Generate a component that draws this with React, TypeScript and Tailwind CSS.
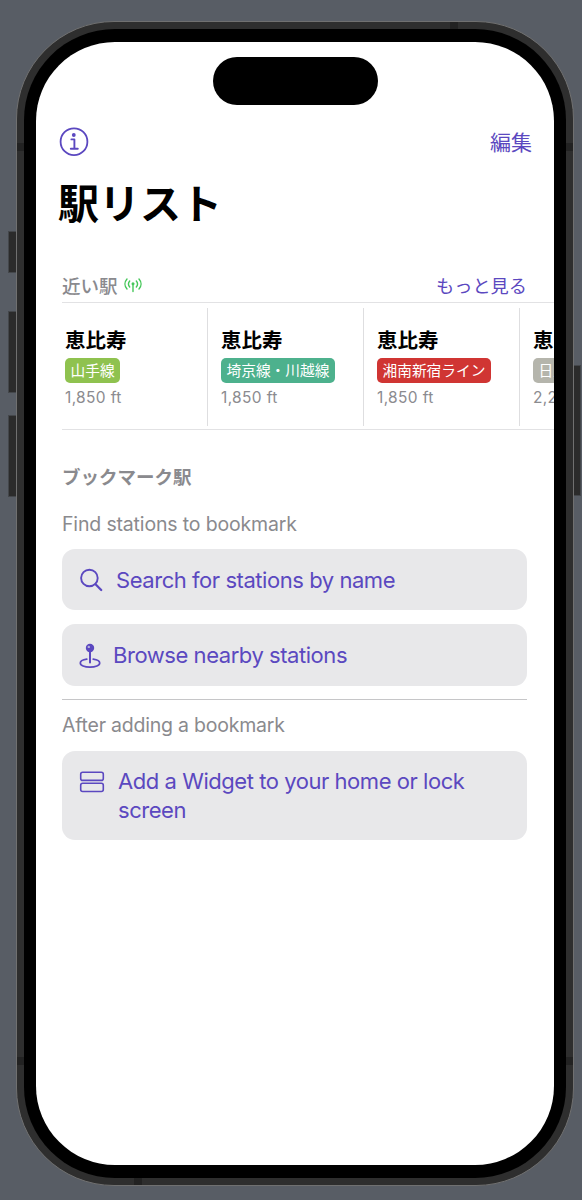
import type { ReactNode } from "react";

type Station = { name: string; line: string; badge: string; distance: string };

const stations: Station[] = [
  { name: "恵比寿", line: "山手線", badge: "bg-[#8fc24f]", distance: "1,850 ft" },
  { name: "恵比寿", line: "埼京線・川越線", badge: "bg-[#4db18d]", distance: "1,850 ft" },
  { name: "恵比寿", line: "湘南新宿ライン", badge: "bg-[#d03533]", distance: "1,850 ft" },
  { name: "恵比寿", line: "日比谷線", badge: "bg-[#b5b5ac]", distance: "2,200 ft" },
];

function InfoIcon() {
  return (
    <svg width="30" height="30" viewBox="0 0 30 30" fill="none" stroke="currentColor" strokeWidth="1.8">
      <circle cx="15" cy="14.7" r="13.4" />
      <circle cx="14.8" cy="8" r="1.9" fill="currentColor" stroke="none" />
      <path d="M12.4 12.4h3v9.2M11.8 21.8h7" strokeWidth="1.9" strokeLinecap="round" strokeLinejoin="round" />
    </svg>
  );
}

function AntennaIcon() {
  return (
    <svg width="20" height="16" viewBox="0 0 20 16" fill="none" stroke="currentColor" strokeWidth="1.4" strokeLinecap="round">
      <path d="M4 2c-2.700 3-2.700 7 0 10M16 2c2.700 3 2.700 7 0 10M6.700 4c-1.600 1.900-1.600 4.100 0 6M13.300 4c1.600 1.900 1.600 4.100 0 6M10 7.500v7" />
      <circle cx="10" cy="6.700" r="1.500" fill="currentColor" stroke="none" />
    </svg>
  );
}

function SearchIcon() {
  return (
    <svg width="24" height="24" viewBox="0 0 24 24" fill="none" stroke="currentColor" strokeLinecap="round">
      <circle cx="10.400" cy="10" r="8.300" strokeWidth="1.900" />
      <path d="M16.500 16.300l5.700 5.700" strokeWidth="2.300" />
    </svg>
  );
}

function PinIcon() {
  return (
    <svg width="22" height="26" viewBox="0 0 22 26" fill="none" stroke="currentColor" strokeWidth="1.700" strokeLinecap="round">
      <circle cx="11" cy="5" r="4.200" fill="currentColor" stroke="none" />
      <circle cx="9.800" cy="3.900" r="1.200" fill="#b6b0dc" stroke="none" />
      <path d="M11 9v10.500" strokeWidth="2" />
      <path d="M7.800 16.100C3.800 16.600 1.300 18 1.300 20c0 2.500 4.200 4.200 9.700 4.200s9.700-1.700 9.700-4.200c0-2-2.500-3.400-6.500-3.900" />
    </svg>
  );
}

function WidgetIcon() {
  return (
    <svg width="26" height="22" viewBox="0 0 26 22" fill="none" stroke="currentColor" strokeWidth="1.600">
      <rect x="1.700" y="1.200" width="22.600" height="8.200" rx="2" />
      <rect x="1.700" y="12.300" width="22.600" height="8.200" rx="2" />
    </svg>
  );
}

function StationCard({ station }: { station: Station }) {
  return (
    <div className="flex h-[118px] w-[156px] shrink-0 flex-col items-start border-r border-[#dedee0] pl-[13px] pt-[19px]">
      <div className="h-7 text-[20.500px] font-bold leading-7 text-black">{station.name}</div>
      <div className={`mt-[3px] flex h-[25px] items-center whitespace-nowrap rounded-[5px] px-[5.500px] pt-[2px] text-[14.700px] leading-none text-white ${station.badge}`}>
        {station.line}
      </div>
      <div className="mt-[4px] text-[15.500px] leading-[22px] tracking-[0.350px] text-[#8b8b8f]">{station.distance}</div>
    </div>
  );
}

function ActionButton({ className, children }: { className: string; children: ReactNode }) {
  return (
    <button className={`flex w-[465px] rounded-[13px] bg-[#e8e8ea] text-left text-[#5b48c0] ${className}`}>{children}</button>
  );
}

export default function App() {
  return (
    <main className="relative flex h-[1200px] w-[582px] overflow-hidden bg-[#585d65] pl-[16px] pt-[21px] font-['Inter','Noto_Sans_CJK_JP',sans-serif]">
      <i className="absolute left-[8px] top-[231px] h-[42px] w-[9px] border border-[#44474b] bg-[#2b2b2b]" />
      <i className="absolute left-[8px] top-[311px] h-[82px] w-[9px] border border-[#44474b] bg-[#2b2b2b]" />
      <i className="absolute left-[8px] top-[415px] h-[82px] w-[9px] border border-[#44474b] bg-[#2b2b2b]" />
      <i className="absolute left-[573px] top-[365px] h-[131px] w-[8px] border border-[#44474b] bg-[#2b2b2b]" />

      <div className="relative h-[1165px] w-[558px] overflow-hidden rounded-[98px] border border-[#707070] bg-[#2e2e2e] p-[7px]">
        <i className="absolute left-0 top-[121px] h-[8px] w-[7px] bg-[#222]" />
        <i className="absolute right-0 top-[121px] h-[8px] w-[7px] bg-[#222]" />
        <i className="absolute bottom-[120px] left-0 h-[8px] w-[7px] bg-[#222]" />
        <i className="absolute bottom-[120px] right-0 h-[8px] w-[7px] bg-[#222]" />
        <i className="absolute left-[433px] top-0 h-[7px] w-[8px] bg-[#222]" />
        <i className="absolute bottom-0 left-[117px] h-[7px] w-[8px] bg-[#222]" />

        <div className="relative h-full w-full rounded-[91px] bg-black px-[12px] py-[13px]">
          <div className="flex h-[1123px] w-[518px] flex-col overflow-hidden rounded-[79px] bg-white">
            <div className="mt-[15px] h-[48px] w-[165px] shrink-0 self-center rounded-full bg-black" />

            <header className="mt-[18px] flex h-[38px] shrink-0 items-center justify-between pl-[23px] pr-[22px] text-[#5b48c0]">
              <InfoIcon />
              <span className="text-[21px] leading-none">編集</span>
            </header>
            <h1 className="ml-[22px] mt-[15px] h-[56px] shrink-0 text-[41px] font-bold leading-[56px] text-black">駅リスト</h1>

            <section className="mt-[36px] flex shrink-0 flex-col">
              <div className="ml-[26px] flex h-[34px] w-[465px] items-center justify-between">
                <div className="flex items-center gap-[5px]">
                  <h2 className="pt-[2px] text-[18.500px] font-medium leading-none text-[#8a8a8e]">近い駅</h2>
                  <span className="text-[#45c759]"><AntennaIcon /></span>
                </div>
                <span className="pt-[2px] text-[18.200px] leading-none text-[#5b48c0]">もっと見る</span>
              </div>
              <div className="ml-[26px] h-[128px] border-y border-[#e2e2e4]">
                <div className="-ml-[10px] mt-[5px] flex">
                  {stations.map((station) => (
                    <StationCard key={station.line} station={station} />
                  ))}
                </div>
              </div>
            </section>

            <section className="ml-[26px] mt-[34px] flex w-[465px] shrink-0 flex-col">
              <h2 className="h-[26px] text-[18.500px] font-bold leading-[26px] text-[#8a8a8e]">ブックマーク駅</h2>
              <p className="mt-[21px] h-[26px] text-[19.500px] leading-[26px] tracking-[-0.160px] text-[#8a8a8e]">Find stations to bookmark</p>
              <ActionButton className="mt-[12px] h-[61px] items-center pl-[17px]">
                <SearchIcon />
                <span className="ml-[13px] pt-px text-[22px] leading-[29px] tracking-[-0.450px]">Search for stations by name</span>
              </ActionButton>
              <ActionButton className="mt-[14px] h-[62px] items-center pl-[17px]">
                <span className="pt-[2px]"><PinIcon /></span>
                <span className="ml-[12px] pt-px text-[22px] leading-[29px] tracking-[-0.450px]">Browse nearby stations</span>
              </ActionButton>
              <div className="mt-[13px] h-px bg-[#c6c6c8]" />
              <p className="mt-[12px] h-[26px] text-[19.500px] leading-[26px] tracking-[-0.220px] text-[#8a8a8e]">After adding a bookmark</p>
              <ActionButton className="mt-[13px] h-[89px] pl-[17px] pt-[16px]">
                <span className="mt-[4px]"><WidgetIcon /></span>
                <span className="ml-[13px] text-[22px] leading-[29px] tracking-[-0.450px]">Add a Widget to your home or lock<br />screen</span>
              </ActionButton>
            </section>
          </div>
        </div>
      </div>
    </main>
  );
}
